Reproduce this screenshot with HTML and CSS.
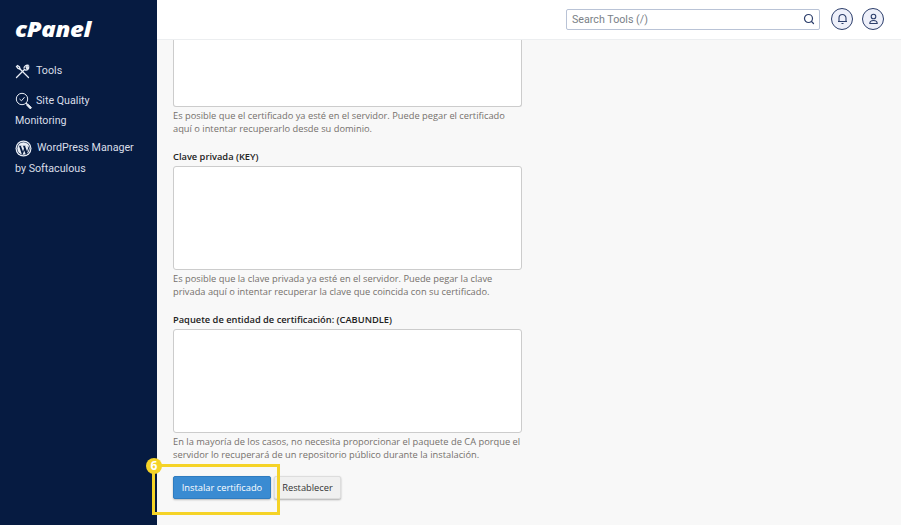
FILE: index.html
```html
<!DOCTYPE html>
<html lang="es">
<head>
<meta charset="utf-8">
<title>cPanel</title>
<link rel="stylesheet" href="styles.css">
</head>
<body>
<div class="app">
  <aside class="sidebar">
    <div class="logo">cPanel</div>
    <nav class="nav">
      <a class="nav-item tools"><svg class="ic" width="15" height="15" viewBox="0 0 15 15" fill="none" stroke="#e8edf5" stroke-width="1.3" stroke-linecap="round"><path d="M1.500 13.500 9.500 5.500"/><path d="M9 4c.3-2 2.300-3.300 4.200-2.700l-2 2 .6 1.200 1.900-1.600c.3 2-1.500 3.700-3.700 3"/><path d="M13.500 13.500 5 5"/><path d="M5 5 3 4.500 1.500 2.500l1-1L4.500 3z"/></svg><span>Tools</span></a>
      <a class="nav-item quality"><svg class="ic" width="18" height="18" viewBox="0 0 18 18" fill="none" stroke="#e8edf5" stroke-width="1"><circle cx="7" cy="7" r="5.700"/><path d="M4.500 7l2 1.800 3-3.600"/><path d="m11 11 1.300 1.300"/><path d="m12.500 11.800 4 3.800-1.200 1.300-3.800-4z" fill="#e8edf5"/></svg><span>Site Quality</span><br><span class="wrapline">Monitoring</span></a>
      <a class="nav-item wp"><svg class="ic" width="17" height="17" viewBox="0 0 17 17"><circle cx="8.500" cy="8.500" r="8" fill="#e8edf5"/><circle cx="8.500" cy="8.500" r="6.800" fill="#061b41"/><circle cx="8.500" cy="8.500" r="6.200" fill="#e8edf5"/><path d="M3.500 5.800h3.200l-.7.500 2 5.200 1-2.800-.8-2.400-.7-.5h3.300l-.7.500 2 5.300 1-3.400-.4-2.100.4.100 1 2-2.500 6.300h-.8l-1.600-4-1.500 4h-.8L4.200 6.300z" fill="#061b41"/></svg><span>WordPress Manager</span><br><span class="wrapline">by Softaculous</span></a>
    </nav>
  </aside>
  <div class="main">
    <header class="topbar">
      <div class="search"><span class="search-text">Search Tools (/)</span><svg width="12" height="12" viewBox="0 0 12 12" fill="none" stroke="#2c3e6b" stroke-width="1.200" stroke-linecap="round"><circle cx="5.500" cy="5.500" r="4"/><path d="m8.500 8.500 2 2"/></svg></div>
      <button class="round"><svg width="11" height="12" viewBox="0 0 11 12" fill="none" stroke="#2c3e6b" stroke-width="1.100"><path d="M2 8.500V5a3.500 3.500 0 0 1 7 0v3.500zM1 8.500h9M4.500 10.500h2"/></svg></button>
      <button class="round"><svg width="11" height="12" viewBox="0 0 11 12" fill="none" stroke="#2c3e6b" stroke-width="1.100"><circle cx="5.500" cy="3.500" r="2.300"/><path d="M1.800 10.500c0-4 7.400-4 7.400 0z"/></svg></button>
    </header>
    <main class="content">
      <div class="field first">
        <div class="box box-first"></div>
        <p class="help">Es posible que el certificado ya esté en el servidor. Puede pegar el certificado<br>aquí o intentar recuperarlo desde su dominio.</p>
      </div>
      <div class="field">
        <label class="label">Clave privada (KEY)</label>
        <div class="box"></div>
        <p class="help">Es posible que la clave privada ya esté en el servidor. Puede pegar la clave<br>privada aquí o intentar recuperar la clave que coincida con su certificado.</p>
      </div>
      <div class="field">
        <label class="label">Paquete de entidad de certificación: (CABUNDLE)</label>
        <div class="box"></div>
        <p class="help">En la mayoría de los casos, no necesita proporcionar el paquete de CA porque el<br>servidor lo recuperará de un repositorio público durante la instalación.</p>
      </div>
      <div class="actions">
        <button class="btn primary">Instalar certificado</button>
        <button class="btn secondary">Restablecer</button>
        <div class="highlight"><span class="badge">6</span></div>
      </div>
    </main>
  </div>
</div>
</body>
</html>
```

FILE: styles.css
```css
* { box-sizing: border-box; }
html, body { margin: 0; height: 100%; overflow: hidden; }
body { font-family: "Open Sans", sans-serif; background: #f8f8f8; }
.app { display: flex; width: 901px; height: 525px; }
.sidebar { width: 157px; flex: none; background: #061b41; color: #d9dee8; font-family: Roboto, sans-serif; font-size: 10.700px; padding: 17px 0 0 15px; }
.logo { font-family: "Open Sans", sans-serif; font-weight: 800; font-style: italic; font-size: 21px; line-height: 24px; color: #fff; letter-spacing: -0.3px; transform: scaleX(1.140); transform-origin: left center; }
.nav { margin-top: 20px; }
.nav-item { display: block; line-height: 20px; }
.ic { vertical-align: middle; margin-right: 6px; }
.tools { margin-bottom: 10px; }
.tools .ic { margin-right: 6px; }
.quality { margin-bottom: 6px; }
.quality .ic { margin-right: 3px; }
.wrapline { line-height: 20px; }
.wp { line-height: 21px; }
.wp .ic { margin-right: 5px; }
.main { flex: 1; min-width: 0; display: flex; flex-direction: column; }
.topbar { height: 40px; flex: none; background: #fff; border-bottom: 1px solid #eceef0; display: flex; align-items: center; justify-content: flex-end; padding: 0 17px 1px 0; gap: 9px; }
.search { width: 254px; height: 21px; border: 1px solid #b9c3d6; border-radius: 2px; display: flex; align-items: center; justify-content: space-between; padding: 0 4px 0 5px; background: #fff; margin-right: 2px; }
.search-text { font-family: Roboto, sans-serif; font-size: 10.700px; color: #7a7f87; }
.round { width: 22px; height: 22px; border-radius: 50%; border: 1px solid #2c3e6b; background: #eef0fa; display: flex; align-items: center; justify-content: center; padding: 0; }
.content { flex: 1; padding: 0 0 0 16px; width: 380px; }
.field { margin-bottom: 16px; }
.label { display: block; font-size: 9.300px; font-weight: 600; line-height: 12px; color: #222; margin-bottom: 3px; }
.box { width: 349px; height: 104px; background: #fff; border: 1px solid #ccc; border-radius: 3px; }
.box-first { height: 67px; border-top: 0; border-radius: 0 0 3px 3px; }
.help { margin: 3px 0 0; font-size: 9.300px; line-height: 12.500px; color: #75706c; white-space: nowrap; }
.actions { position: relative; display: flex; gap: 3px; margin-top: -1px; }
.btn { font-family: "Open Sans", sans-serif; font-size: 9.300px; height: 23px; border-radius: 2px; padding: 0; }
.primary { width: 98px; background: #3a8bd2; border: 1px solid #2f7cc0; color: #fff; box-shadow: 0 1px 2px rgba(0,0,0,.25); }
.secondary { width: 67px; background: #f0f0f0; border: 1px solid #ddd; color: #333; box-shadow: 0 1px 2px rgba(0,0,0,.3); }
.highlight { position: absolute; left: -21px; top: -12px; width: 128px; height: 51px; border: 3px solid #f5d327; }
.badge { position: absolute; left: -9px; top: -9px; width: 16px; height: 16px; border-radius: 50%; background: #f5d327; color: #fff; font-size: 12px; font-weight: 700; line-height: 16px; text-align: center; }
```
